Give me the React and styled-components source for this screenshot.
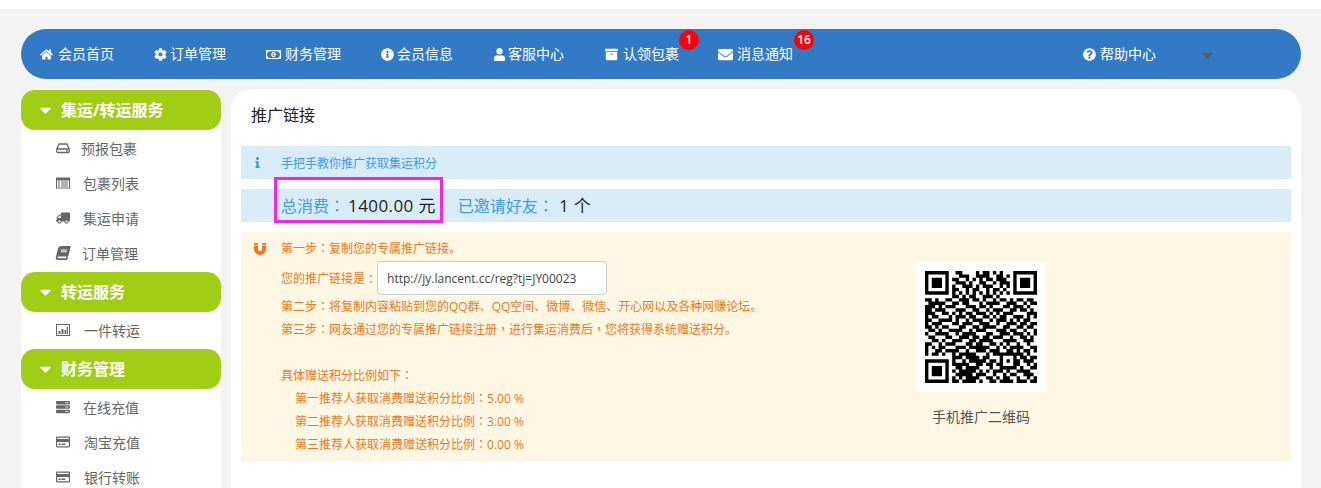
import React from "react";
import styled, { createGlobalStyle } from "styled-components";
import {
  FaHome, FaCog, FaRegMoneyBillAlt, FaInfoCircle, FaUser, FaArchive, FaEnvelope,
  FaQuestionCircle, FaCaretDown, FaInfo, FaTruck, FaBook, FaServer, FaRegCreditCard,
} from "react-icons/fa";

const Global = createGlobalStyle`
  html, body { margin: 0; height: 488px; overflow: hidden; background: #fff; }
  body { font-family: "Open Sans", "Noto Sans CJK SC", sans-serif; }
  * { box-sizing: border-box; }
`;

const Page = styled.div`
  margin-top: 9px;
  padding: 20px 20px 0 21px;
  background: #f3f3f3;
  height: 479px;
  overflow: hidden;
`;

const Nav = styled.nav`
  display: flex;
  align-items: center;
  height: 50px;
  padding: 0 0 0 19px;
  gap: 40px;
  background: #337ac6;
  border-radius: 25px;
`;

const NavItem = styled.a`
  position: relative;
  display: flex;
  align-items: center;
  gap: ${(p) => p.$gap || 4}px;
  margin: 0 ${(p) => -(p.$shift || 0)}px 0 ${(p) => p.$shift || 0}px;
  color: #fff;
  font-size: 14px;
  line-height: 20px;
  white-space: nowrap;
  svg { flex: none; }
`;

const Badge = styled.span`
  position: absolute;
  top: -14px;
  right: ${(p) => p.$right}px;
  width: 20px;
  height: 20px;
  border-radius: 50%;
  background: #f00;
  color: #fff;
  font-size: 12px;
  font-weight: 600;
  line-height: 20px;
  text-align: center;
`;

const NavRight = styled.div`
  margin-left: auto;
  display: flex;
  align-items: center;
  gap: 46px;
  padding-right: 88px;
`;

const NavCaret = styled(FaCaretDown)`
  color: #5c5c5c;
  width: 11px;
  height: 18px;
  margin-top: 1px;
`;

const Body = styled.div`
  display: flex;
  gap: 10px;
  margin-top: 10px;
  align-items: flex-start;
`;

const Sidebar = styled.aside`
  flex: none;
  width: 200px;
  margin-top: 1px;
  background: #fff;
  border-radius: 15px 15px 0 0;
`;

const GroupHead = styled.div`
  display: flex;
  align-items: center;
  height: 40px;
  padding: 0 0 2px 19px;
  gap: 10px;
  background: #9fce14;
  border-radius: 14px;
  color: #fff;
  font-size: 16px;
  font-weight: 700;
  svg { width: 11px; height: 18px; margin-top: 2px; }
`;

const GroupList = styled.ul`
  list-style: none;
  margin: 0;
  padding: 1px 0;
`;

const GroupItem = styled.li`
  display: flex;
  align-items: center;
  height: 35px;
  padding: 0 0 2px 35px;
  color: #666;
  font-size: 14px;
`;

const ItemIcon = styled.span`
  display: flex;
  flex: none;
  width: ${(p) => p.$w}px;
  color: #666;
  svg { width: 14px; height: 14px; }
`;

const FlippedTruck = styled(FaTruck)`
  transform: scaleX(-1);
`;

const SlantedBook = styled(FaBook)`
  transform: skewX(-14deg);
`;

const Main = styled.main`
  flex: 1;
  height: 420px;
  padding: 0 10px;
  background: #fff;
  border-radius: 20px 20px 0 0;
`;

const Title = styled.h2`
  margin: 0;
  height: 57px;
  padding: 16px 10px 0;
  font-size: 16px;
  font-weight: 400;
  line-height: 20px;
  color: #222;
`;

const InfoBar = styled.div`
  display: flex;
  align-items: center;
  height: 33px;
  margin-bottom: 10px;
  background: #d8ecf6;
  color: #3d9bf0;
`;

const InfoIcon = styled(FaInfo)`
  width: 7px;
  height: 11px;
  margin: 0 20px 0 13px;
  color: #3d9be0;
`;

const InfoText = styled.span`
  font-size: 12px;
`;

const Stats = styled(InfoBar)`
  position: relative;
  padding: 0 0 2px 40px;
  font-size: 16px;
  gap: 22px;
`;

const Stat = styled.span`
  white-space: nowrap;
`;

const StatValue = styled.b`
  margin-left: ${(p) => p.$gap}px;
  font-size: 17px;
  font-weight: 400;
  letter-spacing: 0.4px;
  color: #222;
`;

const Highlight = styled.div`
  position: absolute;
  left: 33px;
  top: -12px;
  width: 169px;
  height: 46px;
  border: 3px solid #fb1ff0;
  pointer-events: none;
`;

const Steps = styled.section`
  display: flex;
  height: 229px;
  background: #fdf7e3;
  color: #f5761a;
  font-size: 12px;
`;

const MagnetIcon = styled.svg`
  flex: none;
  width: 12px;
  height: 12px;
  margin: 11px 0 0 13px;
  color: #f5761a;
`;

const StepText = styled.div`
  flex: none;
  width: 601px;
  padding: 5px 0 0 15px;
`;

const Line = styled.div`
  height: 23px;
  line-height: 21px;
  white-space: nowrap;
  padding-left: ${(p) => p.$indent || 0}px;
`;

const LinkRow = styled.div`
  display: flex;
  align-items: center;
  height: 34px;
  margin-top: 1px;
`;

const LinkBox = styled.input`
  width: 230px;
  height: 34px;
  padding: 0 9px;
  border: 1px solid #ccc;
  border-radius: 4px;
  background: #fff;
  color: #444;
  font: 12px "Open Sans", "Noto Sans CJK SC", sans-serif;
`;

const QrColumn = styled.div`
  display: flex;
  flex-direction: column;
  align-items: center;
  margin: 30px 0 0 49px;
`;

const QrFrame = styled.div`
  display: flex;
  align-items: center;
  justify-content: center;
  width: 130px;
  height: 130px;
  background: #fff;
`;

const QrCaption = styled.div`
  margin-top: 15px;
  font-size: 14px;
  line-height: 20px;
  color: #555;
`;

const Punct = styled.span`
  font-family: "Noto Sans CJK TC", sans-serif;
`;

const zh = (text) =>
  text.split(/([：，])/).map((part, i) =>
    part === "：" || part === "，" ? <Punct key={i}>{part}</Punct> : part
  );

const HddIcon = () => (
  <svg viewBox="0 0 14 14" fill="none" stroke="currentColor" strokeWidth="1.3">
    <path d="M3.2 3h7.6l2.4 5v2.6a.9.9 0 0 1-.9.9H1.700a.9.9 0 0 1-.9-.9V8zM1 8h12" />
    <path d="M10 9.800h1.800" />
  </svg>
);

const ListIcon = () => (
  <svg viewBox="0 0 14 14" fill="currentColor">
    <path d="M0 1.500h14v11H0zM1 4.500v7h12v-7z" fillRule="evenodd" />
    <path d="M2 5.500h2v1H2zM5 5.500h7v1H5zM2 7.500h2v1H2zM5 7.500h7v1H5zM2 9.500h2v1H2zM5 9.500h7v1H5z" />
  </svg>
);

const ChartIcon = () => (
  <svg viewBox="0 0 14 14" fill="currentColor">
    <path d="M0 1h14v12H0zM1 2v10h12V2z" fillRule="evenodd" />
    <path d="M2.500 8h2v3h-2zM5.500 6h2v5h-2zM8.500 7h1.500v4H8.500zM10.700 4h1.300v7h-1.300z" />
  </svg>
);

const QR = [
  "111111100110000101101010001111111",
  "100000100011100111100110101000001",
  "101110101100101010110111001011101",
  "101110100111010011001011101011101",
  "101110101001110101110010101011101",
  "100000101100101100101101001000001",
  "111111101010101010101010101111111",
  "000000001101011001110100000000000",
  "110100110011101101001011010110110",
  "011111001101100010111100111001011",
  "111010111000111011010001101110100",
  "110111000111001100101110011011010",
  "111001101010110111010101110000111",
  "101100010111011001101011001110101",
  "110011110100101110010111010101100",
  "101110001101110011100100111011011",
  "110101100011001101111001100110110",
  "011010011110010111000111011001001",
  "100111100101111000110011101110101",
  "011000110011101101101110010011010",
  "001101001110011011110001111001110",
  "110010111000110110011010100100100",
  "101011000111011111100101011110011",
  "100110111100100111011100110101101",
  "101101001011111000101111111110100",
  "000000001110111101100010001011011",
  "111111101001011111011010101101110",
  "100000101111100110110110001100101",
  "101110100110111100010011111010011",
  "101110101011111010101110100111100",
  "101110100111110111001001011001110",
  "100000101010111100110101100100101",
  "111111101101111010011011110111011",
];

const qrPath = QR.map((row, y) =>
  row.split("").map((c, x) => (c === "1" ? `M${x} ${y}h1v1h-1z` : "")).join("")
).join("");

const navItems = [
  { icon: FaHome, size: 13, gap: 5, label: "会员首页" },
  { icon: FaCog, size: 13, gap: 3, label: "订单管理" },
  { icon: FaRegMoneyBillAlt, size: 15, gap: 4, label: "财务管理" },
  { icon: FaInfoCircle, size: 13, gap: 3, label: "会员信息" },
  { icon: FaUser, size: 13, gap: 2, label: "客服中心" },
  { icon: FaArchive, size: 13, gap: 5, label: "认领包裹", badge: "1", right: -20, shift: 1 },
  { icon: FaEnvelope, size: 15, gap: 4, label: "消息通知", badge: "16", right: -21 },
];

const groups = [
  { title: "集运/转运服务", items: [
    { icon: HddIcon, w: 25, label: "预报包裹" },
    { icon: ListIcon, w: 27, label: "包裹列表" },
    { icon: FlippedTruck, w: 27, label: "集运申请" },
    { icon: SlantedBook, w: 26, label: "订单管理" },
  ] },
  { title: "转运服务", items: [{ icon: ChartIcon, w: 28, label: "一件转运" }] },
  { title: "财务管理", items: [
    { icon: FaServer, w: 27, label: "在线充值" },
    { icon: FaRegCreditCard, w: 28, label: "淘宝充值" },
    { icon: FaRegCreditCard, w: 28, label: "银行转账" },
  ] },
];

export default function App() {
  return (
    <>
      <Global />
      <Page>
        <Nav>
          {navItems.map(({ icon: Icon, size, gap, label, badge, right, shift }) => (
            <NavItem key={label} $gap={gap} $shift={shift}>
              <Icon size={size} />
              {label}
              {badge && <Badge $right={right}>{badge}</Badge>}
            </NavItem>
          ))}
          <NavRight>
            <NavItem $gap={4}>
              <FaQuestionCircle size={13} />
              帮助中心
            </NavItem>
            <NavCaret />
          </NavRight>
        </Nav>
        <Body>
          <Sidebar>
            {groups.map((g) => (
              <div key={g.title}>
                <GroupHead>
                  <FaCaretDown />
                  {g.title}
                </GroupHead>
                <GroupList>
                  {g.items.map(({ icon: Icon, w, label }) => (
                    <GroupItem key={label}>
                      <ItemIcon $w={w}><Icon /></ItemIcon>
                      {label}
                    </GroupItem>
                  ))}
                </GroupList>
              </div>
            ))}
          </Sidebar>
          <Main>
            <Title>推广链接</Title>
            <InfoBar>
              <InfoIcon />
              <InfoText>手把手教你推广获取集运积分</InfoText>
            </InfoBar>
            <Stats>
              <Stat>总消费{zh("：")}<StatValue $gap={3}>1400.00 元</StatValue></Stat>
              <Stat>已邀请好友{zh("：")}<StatValue $gap={5}>1 个</StatValue></Stat>
              <Highlight />
            </Stats>
            <Steps>
              <MagnetIcon viewBox="0 0 12 12" fill="currentColor">
                <path d="M0 0h4v1.800H0zM8 0h4v1.800H8z" />
                <path d="M0 2.400h4V6a2 2 0 0 0 4 0V2.400h4V6a6 6 0 0 1-12 0z" />
              </MagnetIcon>
              <StepText>
                <Line>{zh("第一步：复制您的专属推广链接。")}</Line>
                <LinkRow>
                  {zh("您的推广链接是：")}
                  <LinkBox readOnly value="http://jy.lancent.cc/reg?tj=JY00023" />
                </LinkRow>
                <Line>{zh("第二步：将复制内容粘贴到您的QQ群、QQ空间、微博、微信、开心网以及各种网赚论坛。")}</Line>
                <Line>{zh("第三步：网友通过您的专属推广链接注册，进行集运消费后，您将获得系统赠送积分。")}</Line>
                <Line />
                <Line>{zh("具体赠送积分比例如下：")}</Line>
                <Line $indent={14}>{zh("第一推荐人获取消费赠送积分比例：5.00 %")}</Line>
                <Line $indent={14}>{zh("第二推荐人获取消费赠送积分比例：3.00 %")}</Line>
                <Line $indent={14}>{zh("第三推荐人获取消费赠送积分比例：0.00 %")}</Line>
              </StepText>
              <QrColumn>
                <QrFrame>
                  <svg width="112" height="112" viewBox="0 0 33 33" aria-label="二维码">
                    <path d={qrPath} fill="#000" />
                  </svg>
                </QrFrame>
                <QrCaption>手机推广二维码</QrCaption>
              </QrColumn>
            </Steps>
          </Main>
        </Body>
      </Page>
    </>
  );
}
